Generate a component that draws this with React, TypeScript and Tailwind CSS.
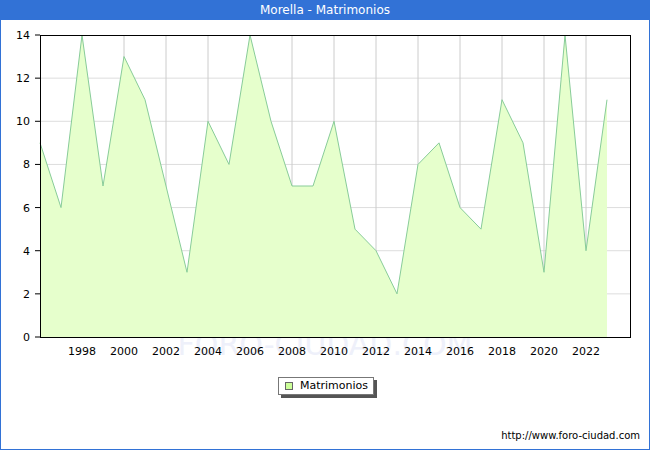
const data = [9,6,14,7,13,11,7,3,10,8,14,10,7,7,10,5,4,2,8,9,6,5,11,9,3,14,4,11];
const X0 = 40, DX = 21, Y0 = 337, DY = 302 / 14;
const px = (i: number) => X0 + i * DX;
const py = (v: number) => Y0 - v * DY;

export default function App() {
  const pts = data.map((v, i) => `${px(i)},${py(v)}`).join(" ");
  const area = `${px(0)},${Y0} ${pts} ${px(data.length - 1)},${Y0}`;
  const font = { fontFamily: '"DejaVu Sans", sans-serif' };
  return (
    <div className="w-[650px] h-[450px] bg-[#3272d6] px-[1px] pb-[1px] flex flex-col" style={font}>
      <div className="h-[20px] flex items-center justify-center text-white text-[12px]">Morella - Matrimonios</div>
      <div className="flex-1 bg-white flex flex-col">
        <svg width="648" height="345" viewBox="1 20 648 345">
          <text x="325" y="355" textAnchor="middle" fontSize="30" fill="#eef0fa" style={font}>FORO-CIUDAD.COM</text>
          {[2,4,6,8,10,12].map(v => <line key={v} x1={40} x2={630} y1={py(v)} y2={py(v)} stroke="#dddddd" />)}
          {Array.from({ length: 13 }, (_, k) => px(2 + 2 * k)).map(x => <line key={x} x1={x} x2={x} y1={35} y2={337} stroke="#cccccc" />)}
          <polygon points={area} fill="#e6ffcc" />
          <polyline points={pts} fill="none" stroke="#88cc99" strokeWidth="1" />
          <rect x="40.5" y="35.5" width="590" height="302" fill="none" stroke="#000" />
          {[0,2,4,6,8,10,12,14].map(v => (
            <g key={v}>
              <line x1={35} x2={40} y1={py(v)} y2={py(v)} stroke="#000" />
              <text x="30" y={py(v) + 4} textAnchor="end" fontSize="11" fill="#000" style={font}>{v}</text>
            </g>
          ))}
          {Array.from({ length: 13 }, (_, k) => k).map(k => (
            <text key={k} x={px(2 + 2 * k)} y="355" textAnchor="middle" fontSize="11" fill="#000" style={font}>{1998 + 2 * k}</text>
          ))}
        </svg>
        <div className="flex justify-center mt-[12px]">
          <div className="relative ml-[2px]">
            <div className="absolute left-[3px] top-[3px] w-[96px] h-[18px] bg-[#555]" />
            <div className="relative w-[96px] h-[18px] bg-white border border-[#777] flex items-center gap-[7px] pl-[6px] text-[11px] text-black">
              <div className="w-[8px] h-[8px] bg-[#ccff99] border border-[#666]" />
              Matrimonios
            </div>
          </div>
        </div>
        <div className="mt-auto mb-[6px] pr-[9px] text-right text-[10px] text-black">http://www.foro-ciudad.com</div>
      </div>
    </div>
  );
}
